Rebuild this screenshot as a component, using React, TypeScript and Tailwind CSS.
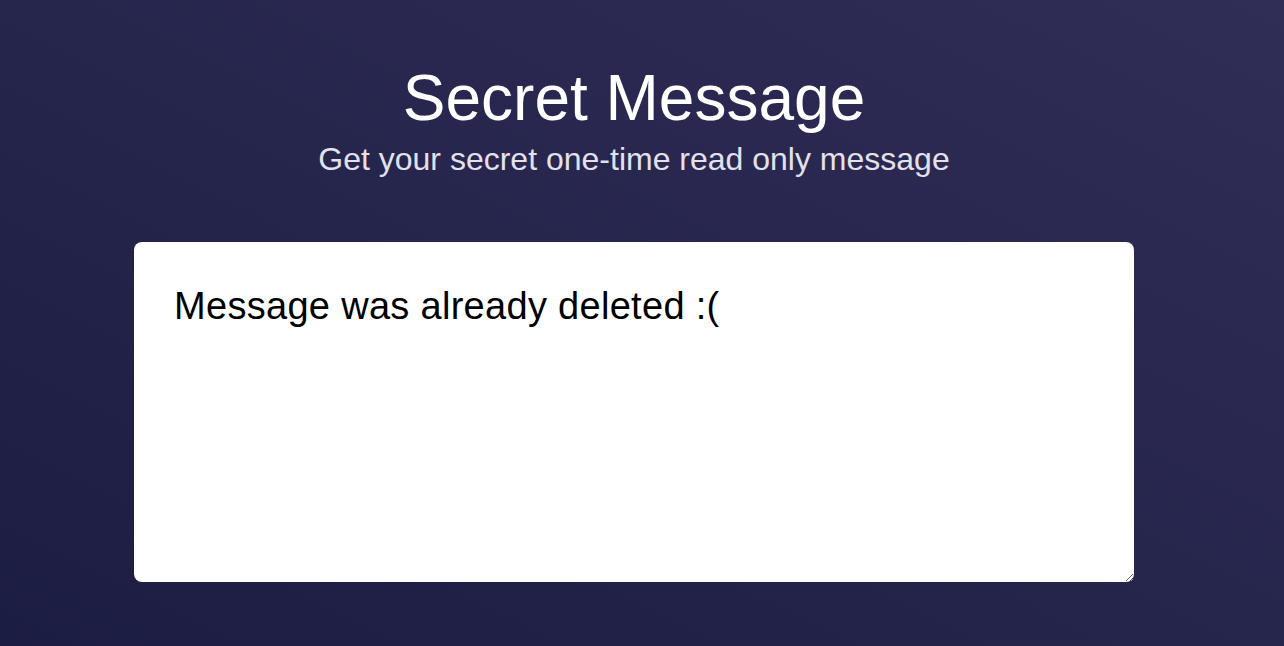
export default function App() {
  return (
    <div
      className="min-h-[646px] w-full flex flex-col items-center pr-4 bg-linear-to-tr from-[#1c1d43] to-[#302d56]"
      style={{ fontFamily: '"Liberation Sans", Arial, sans-serif' }}
    >
      <h1 className="mt-[66px] text-[64px] leading-none text-white">Secret Message</h1>
      <p className="mt-[13px] text-[32px] leading-none text-[#e2e1ec]">
        Get your secret one-time read only message
      </p>
      <textarea
        readOnly
        value="Message was already deleted :("
        className="mt-[67px] w-[1000px] h-[340px] rounded-lg bg-white px-10 pt-[42px] text-[38px] leading-[1.2] tracking-[0.3px] text-black outline-none resize"
        style={{ fontFamily: '"Liberation Sans", Arial, sans-serif' }}
      />
    </div>
  );
}
